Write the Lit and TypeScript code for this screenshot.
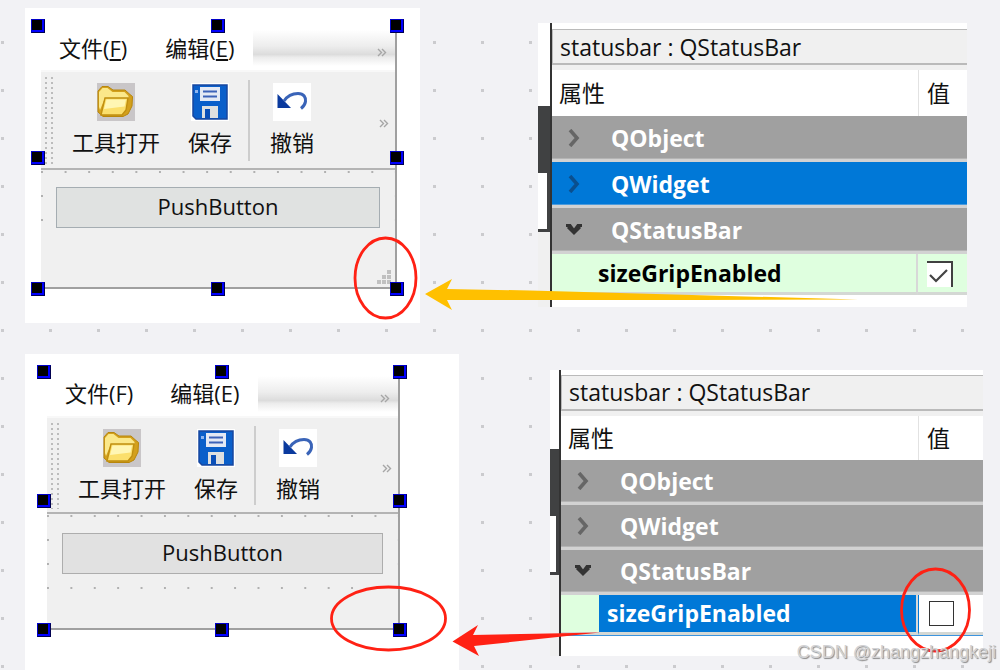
import { LitElement, html, css, svg, nothing } from "lit";
import { customElement, property } from "lit/decorators.js";

const folderIcon = svg`
  <rect width="38" height="38" fill="#c9c6c8"/>
  <path d="M1 8l4-4.500h6l5 3.500h12l5 4.500 2.500 2L35 23l-4 8-5 2.500H6L1 29z" fill="#d3a01c" stroke="#b8860b" stroke-width="1"/>
  <path d="M2 24V9l3.500-4h5l5 4h12l4 4v2H8L3 27z" fill="#fbe88a"/>
  <path d="M8 15h23l-2 12-4 5H4z" fill="#fbdf6c" stroke="#c08f10" stroke-width="1.400"/>
  <path d="M9.500 16.500H29l-1.500 7L7 26z" fill="#fff6b4"/>`;

const saveIcon = svg`
  <rect width="38" height="38" fill="#fff"/>
  <path d="M2 2h34v34H5l-3-3z" fill="#0a5fca" stroke="#1747a0" stroke-width="1.500"/>
  <rect x="9" y="4" width="20" height="14" fill="#e4e9f4"/>
  <path d="M12 8.500h14M12 13.500h14" stroke="#3c62b8" stroke-width="2"/>
  <path d="M11 23h16v12H11z" fill="#dfe0e0"/>
  <rect x="14" y="26" width="5" height="9" fill="#0a4fb8"/>
  <rect x="4" y="7" width="3" height="3" fill="#8fb4ee"/>`;

const undoIcon = svg`
  <rect width="38" height="38" fill="#fff"/>
  <path d="M4.500 11v14H18z" fill="#0a3a9e"/>
  <path d="M11 18C15 12 20 10.500 25 10.500c6 0 8 4 7.500 8-.4 3-2 5-4.500 7" fill="none" stroke="#3a64b8" stroke-width="3"/>`;

const moreIcon = html`<svg class="more" viewBox="0 0 10 9" width="10" height="9" aria-hidden="true">
  <path d="M1 1l3.500 3.500L1 8M5 1l3.500 3.500L5 8" fill="none" stroke="#a6a6a6" stroke-width="1.400"/></svg>`;

@customElement("form-editor")
class FormEditor extends LitElement {
  @property({ type: Boolean, reflect: true }) grip = false;

  static styles = css`
    :host { display: block; background: #fff; padding: 18px 23px 34px 16px; }
    :host(:not([grip])) { padding: 18px 59px 40px 22px; }
    .window {
      position: relative; background: #f0f0f0;
      border-right: 2px solid #a0a0a0; border-bottom: 2px solid #a0a0a0;
    }
    button { font: inherit; color: inherit; background: none; border: 0; padding: 0; margin: 0; }
    .menubar { display: flex; height: 44px; background: #fff; padding-left: 18px; }
    .menubar button {
      display: flex; align-items: flex-start; line-height: 32px; height: 44px;
      padding-top: 6px; margin-right: 38px; white-space: nowrap;
    }
    :host(:not([grip])) .menubar button { padding-top: 5px; margin-right: 37px; }
    .menubar button:nth-of-type(2), :host(:not([grip])) .menubar button:nth-of-type(2) { margin-right: 18px; }
    .rest {
      flex: 1; margin: 4px 0; display: flex; justify-content: flex-end; align-items: center;
      padding: 8px 8px 0 0;
      background: linear-gradient(#fff, #ededed 45%, #dcdcdc 68%, #ececec 76%, #fff);
    }
    .toolbar {
      display: flex; border-top: 2px solid #f8f8f8; border-bottom: 2px solid #b4b4b4;
      padding: 0 6px 0 4px;
    }
    .dots {
      width: 8px; margin: 5px 19px 3px 0;
      background: conic-gradient(at 2px 2px, transparent 75%, #bcbcbc 0) 0 0 / 6px 5px;
    }
    .tool { display: flex; flex-direction: column; align-items: center; gap: 6px; padding: 11px 0; line-height: 30px; white-space: nowrap; }
    :host(:not([grip])) .tool { padding-bottom: 9px; }
    .tool + .tool { margin-left: 28px; }
    .sep { width: 2px; background: #cdcdcd; margin: 8px 20px 7px 16px; }
    .end { margin-left: auto; align-self: center; display: flex; padding-top: 6px; }
    .central {
      padding: 17px 15px 14px;
      background: conic-gradient(at 2px 2px, transparent 75%, #b0b0b0 0) 0 1px / calc(100% / 15) 24px;
    }
    :host(:not([grip])) .central { padding: 19px 15px 27px; }
    .push { display: block; width: 100%; height: 41px; background: #e0e2e1; border: 1px solid #a5adb2; line-height: 35px; padding-bottom: 3px; }
    :host(:not([grip])) .push { background: #e1e1e1; border-color: #adadad; }
    .status { height: 42px; display: flex; justify-content: flex-end; align-items: flex-end; padding: 0 4px 3px; }
    :host(:not([grip])) .status { height: 24px; }
    .handles {
      position: absolute; inset: -7px -9px -9px -10px; pointer-events: none;
      display: grid; grid-template: repeat(3, 14px) / repeat(3, 14px);
      justify-content: space-between; align-content: space-between;
    }
    .handles i {
      box-sizing: border-box; background: #000; border: 1px solid #0000c8;
      border-right-color: #000050; border-bottom-color: #000050;
      box-shadow: inset -2px -2px #0000ff;
    }
    .handles i.none { visibility: hidden; }
    svg { display: block; }
  `;

  private tool(icon: unknown, label: string) {
    return html`<button class="tool" type="button">
      <svg viewBox="0 0 38 38" width="38" height="38" aria-hidden="true">${icon}</svg>
      <span>${label}</span>
    </button>`;
  }

  render() {
    const key = (k: string) => (this.grip ? html`<u>${k}</u>` : k);
    return html`<div class="window">
      <div class="menubar">
        <button type="button"><span>文件(${key("F")})</span></button>
        <button type="button"><span>编辑(${key("E")})</span></button>
        <div class="rest">${moreIcon}</div>
      </div>
      <div class="toolbar">
        <div class="dots"></div>
        ${this.tool(folderIcon, "工具打开")}${this.tool(saveIcon, "保存")}
        <div class="sep"></div>
        ${this.tool(undoIcon, "撤销")}
        <div class="end">${moreIcon}</div>
      </div>
      <div class="central"><button class="push" type="button">PushButton</button></div>
      <div class="status">
        ${this.grip
          ? html`<svg viewBox="0 0 14 14" width="14" height="14" aria-hidden="true">
              <path d="M10 0h4v4h-4zM5 5h4v4H5zM10 5h4v4h-4zM0 10h4v4H0zM5 10h4v4H5zM10 10h4v4h-4z" fill="#c0c0c0"/></svg>`
          : nothing}
      </div>
      <div class="handles">
        ${[0, 1, 2, 3, 4, 5, 6, 7, 8].map((n) => html`<i class=${n === 4 ? "none" : ""}></i>`)}
      </div>
    </div>`;
  }
}

@customElement("property-editor")
class PropertyEditor extends LitElement {
  @property({ type: Boolean, reflect: true }) grip = false;

  static styles = css`
    :host { display: flex; background: #fff; font-size: 23px; --head: 46px; --row: 46px; --last: 41px; }
    :host(:not([grip])) { --head: 44px; --row: 45px; --last: 40px; }
    .edge { width: 12px; display: flex; flex-direction: column; flex: none; }
    :host(:not([grip])) .edge { width: 9px; }
    .thumb { margin-top: 83px; height: 67px; background: #404142; }
    :host(:not([grip])) .thumb { margin-top: 79px; }
    .groove { height: 56px; border-right: 3px solid #404142; border-bottom: 3px solid #404142; }
    .floor { flex: 1; background: #f0f0f0; }
    .main { flex: 1; min-width: 0; border-left: 2px solid #333; padding-top: 6px; }
    :host(:not([grip])) .main { padding-top: 5px; }
    .title { background: #f0f0f0; border: 1px solid #bababa; border-width: 1px 0 2px 1px; padding-left: 7px; line-height: 35px; height: 33px; white-space: nowrap; }
    :host(:not([grip])) .title { line-height: 33px; }
    .gap { height: 5px; background: #f0f0f0; }
    table { border-collapse: separate; border-spacing: 0; width: 100%; table-layout: fixed; }
    .value { width: 49px; }
    :host(:not([grip])) .value { width: 65px; }
    th, td { padding: 0; text-align: left; box-sizing: border-box; height: var(--row); white-space: nowrap; }
    thead th { font-weight: 400; padding-left: 7px; height: var(--head); }
    thead th + th { border-left: 1px solid #e2e2e2; padding-left: 8px; }
    tbody { font-weight: 700; }
    .group td { background: #a0a0a0; color: #fff; border-bottom: 3px solid #d2d2d2; box-shadow: inset 0 -1px #b4b4b4; }
    .group.current td { background: #0078d7; box-shadow: inset 0 -1px #4c9bdc; }
    .cell { display: flex; align-items: center; }
    .cell button { width: 22px; height: 22px; padding: 0; border: 0; background: none; margin: 0 26px 0 11px; display: grid; place-items: center; }
    .item td { height: var(--last); background: #dfffdf; border-bottom: 3px solid #d4d8d4; color: #000; }
    .item td:first-child { border-right: 2px solid #d8d8d8; }
    .item label { display: block; margin-left: 38px; padding-left: 8px; line-height: 38px; }
    .item.current label { line-height: 37px; background: #0078d7; }
    .item.current td { color: #fff; }
    .item.current td + td { background: #fff; }
    .item td + td { padding: 2px 0 0 9px; }
    .item.current td + td { padding: 0 0 0 10px; border-left: 1px solid #0078d7; }
    .item.current td { box-shadow: 0 1px #3c94de; }
    input { appearance: none; display: block; margin: 0; width: 25px; height: 25px; background: #fff; border: 1px solid #333; }
    input:checked {
      border: 0; border-top: 2px solid #404040; border-right: 2px solid #404040; width: 26px; height: 26px;
      background: #fff url("data:image/svg+xml,%3Csvg xmlns='http://www.w3.org/2000/svg' viewBox='0 0 24 24'%3E%3Cpath d='M3 12l6 6L20 7' fill='none' stroke='%23444' stroke-width='2.2'/%3E%3C/svg%3E") center / 24px 24px no-repeat;
    }
    .below { height: 12px; }
    :host(:not([grip])) .below { height: 21px; }
  `;

  private group(name: string, open: boolean, current = false) {
    return html`<tr class="group ${current ? "current" : ""}">
      <td colspan="2"><div class="cell">
        <button type="button" aria-label=${name} aria-expanded=${open ? "true" : "false"}>
          ${open
            ? html`<svg width="18" height="14" viewBox="0 0 18 14"><path d="M1 2.500h4L9 8l4-5.500h4M3 4l6 6 6-6" fill="none" stroke="#333" stroke-width="3"/></svg>`
            : html`<svg width="12" height="18" viewBox="0 0 12 18"><path d="M2 1l7 8-7 8" fill="none" stroke=${current ? "#0a4f8e" : "#666"} stroke-width="3.600"/></svg>`}
        </button>
        <span>${name}</span>
      </div></td>
    </tr>`;
  }

  render() {
    return html`
      <div class="edge"><div class="thumb"></div><div class="groove"></div><div class="floor"></div></div>
      <div class="main">
        <div class="title">statusbar : QStatusBar</div>
        <div class="gap"></div>
        <table>
          <colgroup><col><col class="value"></colgroup>
          <thead><tr><th scope="col">属性</th><th scope="col">值</th></tr></thead>
          <tbody>
            ${this.group("QObject", false)}
            ${this.group("QWidget", false, this.grip)}
            ${this.group("QStatusBar", true)}
            <tr class="item ${this.grip ? "" : "current"}">
              <td><label for="grip">sizeGripEnabled</label></td>
              <td><input id="grip" type="checkbox" .checked=${this.grip}></td>
            </tr>
          </tbody>
        </table>
        <div class="below"></div>
      </div>`;
  }
}

@customElement("app-root")
class AppRoot extends LitElement {
  static styles = css`
    :host {
      display: block; box-sizing: border-box; position: relative; min-height: 100vh; overflow: hidden;
      padding-top: 8px;
      font: 22px/30px "Open Sans", "Noto Sans CJK SC", sans-serif; color: #111;
      background: #f2f2f5 conic-gradient(at 3px 3px, transparent 75%, #cbcbce 0) 1px 41px / 48px 48px;
    }
    .pair { display: grid; align-items: start; }
    .on { grid-template-columns: 395fr 429fr; column-gap: 118px; padding: 0 33px 31px 25px; }
    .off { grid-template-columns: 434fr 433fr; column-gap: 91px; padding: 0 17px 0 25px; }
    .on property-editor { margin-top: 15px; }
    .off property-editor { margin-top: 16px; }
    .marks { position: absolute; left: 0; top: 0; pointer-events: none; }
    .mark {
      position: absolute; right: 4px; top: 638px; font: 18px/28px "Liberation Sans", sans-serif;
      color: #d2d2d4; text-shadow: 1px 1px 1px #888;
    }
  `;

  render() {
    return html`
      <section class="pair on">
        <form-editor grip></form-editor>
        <property-editor grip></property-editor>
      </section>
      <section class="pair off">
        <form-editor></form-editor>
        <property-editor></property-editor>
      </section>
      <svg class="marks" width="1000" height="670" viewBox="0 0 1000 670" aria-hidden="true">
        <g fill="none" stroke="#ff2114" stroke-width="2.800">
          <ellipse cx="385.500" cy="278" rx="30.500" ry="40"/>
          <ellipse cx="388.500" cy="618.500" rx="57" ry="31.500"/>
          <ellipse cx="935.500" cy="610" rx="34" ry="41"/>
        </g>
        <path d="M425 294l27-15-5 10 83 1.500L858 299.500 700 300H447l5 10z" fill="#ffc000"/>
        <path d="M452.500 641.500L478 625l-5 10 127-2.500L474 646l5 10z" fill="#ff2114"/>
      </svg>
      <div class="mark">CSDN @zhangzhangkeji</div>`;
  }
}
